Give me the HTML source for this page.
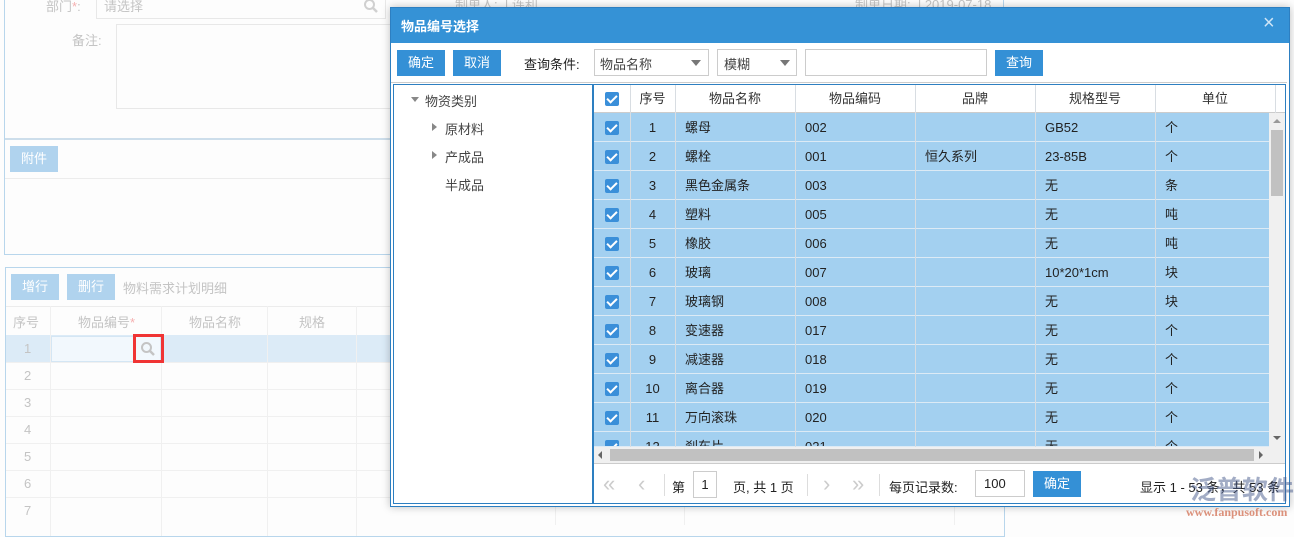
<!DOCTYPE html>
<html><head><meta charset="utf-8"><style>
*{box-sizing:border-box;margin:0;padding:0}
body{width:1294px;height:525px;overflow:hidden;background:#fdfdfd;position:relative;font-family:"Liberation Sans","Noto Sans CJK SC",sans-serif;font-size:13px;color:#222}
.a{position:absolute}
.gt{color:#c4c4c4}
.lb{background:#b0d3ee;color:#fff;text-align:center;line-height:26px}
.db{background:#3490d6;color:#fff;text-align:center;line-height:26px}
.cb{position:absolute;width:14px;height:14px;background:#3a8fd9;border-radius:2px}
.cb:after{content:"";position:absolute;left:4px;top:1px;width:4px;height:8px;border:solid #fff;border-width:0 2px 2px 0;transform:rotate(45deg)}
.c{position:absolute;top:0;line-height:29px;white-space:nowrap}
</style></head><body>
<div class="a gt" style="left:46px;top:-4px;">部门<span style="color:#f5b0b0">*</span>:</div>
<div class="a" style="left:96px;top:-2px;width:290px;height:21px;border:1px solid #e8e8e8"></div>
<div class="a gt" style="left:104px;top:-4px">请选择</div>
<div class="a gt" style="left:455px;top:-6px">制单人: &nbsp;| 连利</div>
<div class="a gt" style="left:855px;top:-6px">制单日期: &nbsp;| 2019-07-18</div>
<div class="a" style="left:4px;top:0;width:1000px;height:255px;border:1px solid #b8d6ec;border-top:none"></div>
<div class="a gt" style="left:72px;top:30px">备注:</div>
<div class="a" style="left:116px;top:24px;width:280px;height:85px;border:1px solid #e8e8e8"></div>
<div class="a" style="left:5px;top:138px;width:390px;height:2px;background:#cddeeb"></div>
<div class="a lb" style="left:10px;top:146px;width:48px;height:26px">附件</div>
<div class="a" style="left:5px;top:178px;width:390px;height:1px;background:#ececec"></div>
<div class="a" style="left:5px;top:267px;width:1000px;height:270px;border:1px solid #b8d6ec"></div>
<div class="a lb" style="left:11px;top:274px;width:48px;height:26px">增行</div>
<div class="a lb" style="left:67px;top:274px;width:48px;height:26px">删行</div>
<div class="a gt" style="left:123px;top:278px">物料需求计划明细</div>
<div class="a" style="left:6px;top:306px;width:1200px;height:1px;background:#ececec"></div>
<div class="a" style="left:6px;top:335px;width:390px;height:27px;background:#dcebf7"></div>
<div class="a" style="left:51px;top:336px;width:110px;height:26px;background:#f2f8fd;border:1px solid #d4e6f4"></div>
<div class="a gt" style="left:13px;top:312px">序号</div>
<div class="a gt" style="left:78px;top:312px">物品编号<span style="color:#f5b0b0">*</span></div>
<div class="a gt" style="left:189px;top:312px">物品名称</div>
<div class="a gt" style="left:299px;top:312px">规格</div>
<div class="a" style="left:50px;top:306px;width:1px;height:230px;background:#f0f0f0"></div>
<div class="a" style="left:161px;top:306px;width:1px;height:230px;background:#f0f0f0"></div>
<div class="a" style="left:267px;top:306px;width:1px;height:230px;background:#f0f0f0"></div>
<div class="a" style="left:356px;top:306px;width:1px;height:230px;background:#f0f0f0"></div>
<div class="a" style="left:6px;top:362px;width:390px;height:1px;background:#f0f0f0"></div>
<div class="a" style="left:6px;top:389px;width:390px;height:1px;background:#f0f0f0"></div>
<div class="a" style="left:6px;top:416px;width:390px;height:1px;background:#f0f0f0"></div>
<div class="a" style="left:6px;top:443px;width:390px;height:1px;background:#f0f0f0"></div>
<div class="a" style="left:6px;top:470px;width:390px;height:1px;background:#f0f0f0"></div>
<div class="a" style="left:6px;top:497px;width:390px;height:1px;background:#f0f0f0"></div>
<div class="a gt" style="left:24px;top:341px">1</div>
<div class="a gt" style="left:24px;top:368px">2</div>
<div class="a gt" style="left:24px;top:395px">3</div>
<div class="a gt" style="left:24px;top:422px">4</div>
<div class="a gt" style="left:24px;top:449px">5</div>
<div class="a gt" style="left:24px;top:476px">6</div>
<div class="a gt" style="left:24px;top:503px">7</div>
<div class="a" style="left:133px;top:334px;width:31px;height:29px;border:3px solid #f03434"></div>
<svg class="a" style="left:140px;top:341px" width="16" height="16"><circle cx="6.5" cy="6.5" r="4.5" fill="none" stroke="#c4c4c4" stroke-width="2"/><line x1="10" y1="10" x2="14" y2="14" stroke="#c4c4c4" stroke-width="2.5"/></svg>
<svg class="a" style="left:363px;top:-2px" width="16" height="16"><circle cx="6.5" cy="6.5" r="4.5" fill="none" stroke="#d0d0d0" stroke-width="2"/><line x1="10" y1="10" x2="14" y2="14" stroke="#d0d0d0" stroke-width="2.5"/></svg>
<div class="a" style="left:555px;top:505px;width:1px;height:20px;background:#f0f0f0"></div>
<div class="a" style="left:684px;top:505px;width:1px;height:20px;background:#f0f0f0"></div>
<div class="a" style="left:954px;top:505px;width:1px;height:20px;background:#f0f0f0"></div>

<div class="a" style="left:390px;top:7px;width:900px;height:500px;background:#fff;border:1px solid #2d7fc1;box-shadow:0 0 8px rgba(0,0,0,.25)"></div>
<div class="a" style="left:391px;top:8px;width:898px;height:35px;background:#3592d6"></div>
<div class="a" style="left:401px;top:16px;color:#fff;font-weight:bold;font-size:13px">物品编号选择</div>
<div class="a" style="left:1263px;top:12px;color:#cfe5f7;font-size:20px">×</div>
<div class="a db" style="left:397px;top:50px;width:48px;height:26px">确定</div>
<div class="a db" style="left:453px;top:50px;width:48px;height:26px">取消</div>
<div class="a" style="left:524px;top:54px">查询条件:</div>
<div class="a" style="left:594px;top:49px;width:115px;height:27px;border:1px solid #ccc"></div>
<div class="a" style="left:600px;top:54px;color:#444">物品名称</div>
<div class="a" style="left:691px;top:60px;border:5px solid transparent;border-top:6px solid #777"></div>
<div class="a" style="left:717px;top:49px;width:80px;height:27px;border:1px solid #ccc"></div>
<div class="a" style="left:724px;top:54px;color:#444">模糊</div>
<div class="a" style="left:780px;top:60px;border:5px solid transparent;border-top:6px solid #777"></div>
<div class="a" style="left:805px;top:49px;width:182px;height:27px;border:1px solid #ccc"></div>
<div class="a db" style="left:995px;top:50px;width:48px;height:26px">查询</div>
<div class="a" style="left:391px;top:82px;width:896px;height:1px;background:#ccc"></div>
<div class="a" style="left:393px;top:84px;width:893px;height:420px;border:1px solid #2d7fc1"></div>
<div class="a" style="left:592px;top:84px;width:2px;height:420px;background:#2d7fc1"></div>
<div class="a" style="left:411px;top:97px;border:4px solid transparent;border-top:5px solid #888"></div>
<div class="a" style="left:425px;top:91px;color:#444">物资类别</div>
<div class="a" style="left:432px;top:123px;border:4px solid transparent;border-left:5px solid #888"></div>
<div class="a" style="left:445px;top:119px;color:#444">原材料</div>
<div class="a" style="left:432px;top:151px;border:4px solid transparent;border-left:5px solid #888"></div>
<div class="a" style="left:445px;top:147px;color:#444">产成品</div>
<div class="a" style="left:445px;top:175px;color:#444">半成品</div>
<div id="g"></div>
<div class="a" style="left:594px;top:447px;width:691px;height:16px;background:#f0f0f0"></div>
<div class="a" style="left:610px;top:449px;width:644px;height:12px;background:#c1c1c1"></div>
<div class="a" style="left:598px;top:451px;border:4px solid transparent;border-right:4px solid #666;border-left:none"></div>
<div class="a" style="left:1259px;top:451px;border:4px solid transparent;border-left:4px solid #666;border-right:none"></div>
<div class="a" style="left:594px;top:463px;width:691px;height:1px;background:#ccc"></div>
<div class="a" style="left:1269px;top:113px;width:16px;height:334px;background:#f0f0f0"></div>
<div class="a" style="left:1271px;top:130px;width:12px;height:66px;background:#c1c1c1"></div>
<div class="a" style="left:1273px;top:119px;border:4px solid transparent;border-bottom:4px solid #999;border-top:none"></div>
<div class="a" style="left:1273px;top:436px;border:4px solid transparent;border-top:4px solid #666;border-bottom:none"></div>
<div class="a" style="left:603px;top:471px;color:#ccc;font-size:22px">«</div>
<div class="a" style="left:638px;top:471px;color:#ccc;font-size:22px">‹</div>
<div class="a" style="left:664px;top:474px;width:1px;height:22px;background:#ddd"></div>
<div class="a" style="left:672px;top:477px">第</div>
<div class="a" style="left:693px;top:471px;width:24px;height:27px;border:1px solid #ccc;text-align:center;line-height:25px">1</div>
<div class="a" style="left:733px;top:477px">页, 共 1 页</div>
<div class="a" style="left:807px;top:474px;width:1px;height:22px;background:#ddd"></div>
<div class="a" style="left:823px;top:471px;color:#ccc;font-size:22px">›</div>
<div class="a" style="left:852px;top:471px;color:#ccc;font-size:22px">»</div>
<div class="a" style="left:879px;top:474px;width:1px;height:22px;background:#ddd"></div>
<div class="a" style="left:889px;top:477px">每页记录数:</div>
<div class="a" style="left:975px;top:470px;width:50px;height:27px;border:1px solid #ccc;padding-left:8px;line-height:25px">100</div>
<div class="a db" style="left:1033px;top:471px;width:48px;height:26px">确定</div>
<div class="a" style="left:1140px;top:477px">显示 1 - 53 条，共 53 条</div>
<div class="a" style="left:1190px;top:470px;color:rgba(70,90,140,.5);font-size:26px;font-weight:bold">泛普软件</div>
<div class="a" style="left:1186px;top:505px;color:rgba(210,110,80,.75);font-family:'Liberation Serif',serif;font-size:12px;font-weight:bold">www.fanpusoft.com</div>
<script>
var rows=[["螺母","002","","GB52","个"],["螺栓","001","恒久系列","23-85B","个"],["黑色金属条","003","","无","条"],["塑料","005","","无","吨"],["橡胶","006","","无","吨"],["玻璃","007","","10*20*1cm","块"],["玻璃钢","008","","无","块"],["变速器","017","","无","个"],["减速器","018","","无","个"],["离合器","019","","无","个"],["万向滚珠","020","","无","个"],["刹车片","021","","无","个"]];
var cols=[594,630,675,795,915,1035,1155,1275];
var h='';
h+='<div class="a" style="left:594px;top:85px;width:691px;height:28px;background:#fff;border-bottom:1px solid #ccc"></div>';
var hd=["序号","物品名称","物品编码","品牌","规格型号","单位"];
for(var i=0;i<6;i++){h+='<div class="a" style="left:'+cols[i+1]+'px;top:85px;line-height:28px;width:'+(cols[i+2]-cols[i+1])+'px;text-align:center;color:#333">'+hd[i]+'</div>';}
h+='<div class="cb" style="left:605px;top:92px"></div>';
for(var r=0;r<12;r++){var y=113+r*29;var hh=Math.min(29,447-y);
h+='<div class="a" style="left:594px;top:'+y+'px;width:675px;height:'+hh+'px;background:#a3d0f0;border-bottom:1px solid #dceaf5;overflow:hidden">';
h+='<div class="cb" style="left:11px;top:8px"></div>';
h+='<div class="c" style="left:36px;width:45px;text-align:center">'+(r+1)+'</div>';
for(var c=0;c<5;c++){h+='<div class="c" style="left:'+(cols[c+2]-594+10)+'px">'+rows[r][c]+'</div>';}
h+='</div>';}
for(var i=1;i<8;i++){h+='<div class="a" style="left:'+cols[i]+'px;top:85px;width:1px;height:362px;background:#d8dde2"></div>';}
document.getElementById('g').innerHTML=h;
</script>
</body></html>
